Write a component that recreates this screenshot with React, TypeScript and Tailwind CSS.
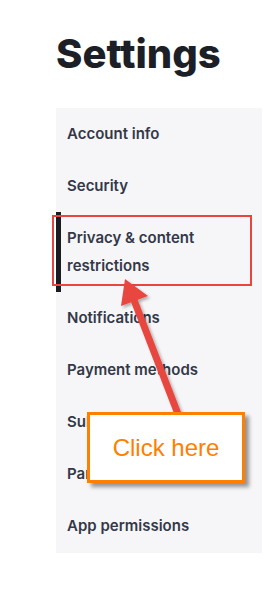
const items = [
  'Account info',
  'Security',
  'Privacy & content restrictions',
  'Notifications',
  'Payment methods',
  'Subscriptions',
  'Parental controls',
  'App permissions',
]

const activeItem = 'Privacy & content restrictions'

export default function App() {
  return (
    <div className="relative min-h-[600px] w-[269px] bg-white font-['Inter','Noto_Sans',sans-serif]">
      <div className="pl-[56px] pt-[29px]">
        <h1 className="text-[40px] font-extrabold leading-[50px] text-[#1d1f27]">
          Settings
        </h1>

        <nav className="mt-[29px] w-[206px] bg-[#f6f6f8] pb-[1px]" aria-label="Settings sections">
          <ul>
            {items.map((item) => {
              const active = item === activeItem
              return (
                <li
                  key={item}
                  className={
                    active
                      ? 'border-l-[5px] border-[#1a1b20] py-3 pl-[6px] pr-4'
                      : 'py-3 pl-[11px] pr-4'
                  }
                >
                  <span className="block text-[15px] font-semibold leading-[28px] text-[#333848]">
                    {item}
                  </span>
                </li>
              )
            })}
          </ul>
        </nav>
      </div>

      {/* tutorial annotation: highlight box */}
      <div className="absolute left-[52px] top-[215px] h-[71px] w-[200px] border-[2.5px] border-[#e8453e]" />

      {/* tutorial annotation: arrow */}
      <svg
        className="pointer-events-none absolute left-0 top-0"
        width="269"
        height="600"
        viewBox="0 0 269 600"
      >
        <defs>
          <filter id="arrow-shadow" x="-20%" y="-20%" width="140%" height="140%">
            <feDropShadow dx="2" dy="2" stdDeviation="1.5" floodColor="#000" floodOpacity="0.3" />
          </filter>
        </defs>
        <g filter="url(#arrow-shadow)" fill="#e8473f">
          <line x1="178" y1="414" x2="134" y2="300" stroke="#e8473f" strokeWidth="7" />
          <polygon points="125,279 121,306 148,296" />
        </g>
      </svg>

      {/* tutorial annotation: callout */}
      <div className="absolute left-[87px] top-[412px] flex h-[71px] w-[158px] items-center justify-center border-[3px] border-[#ff7f00] bg-white shadow-[4px_4px_4px_rgba(0,0,0,0.4)]">
        <span className="font-['Liberation_Sans',Arial,sans-serif] text-[24px] leading-none text-[#ff7f00]">
          Click here
        </span>
      </div>
    </div>
  )
}
